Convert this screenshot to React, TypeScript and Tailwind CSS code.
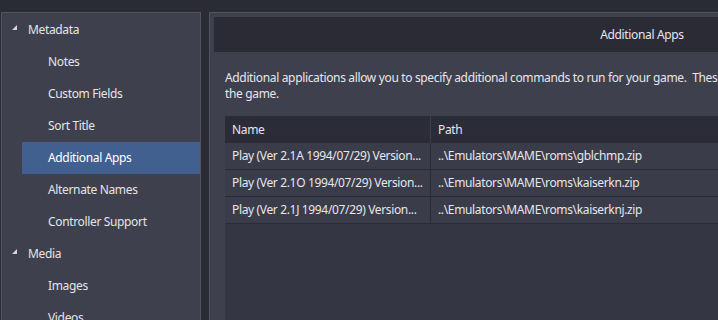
import React from "react";

const font = { fontFamily: '"Noto Sans", "Open Sans", sans-serif', letterSpacing: "-0.35px" };

type NavItem = { label: string; group?: boolean; active?: boolean };

const navItems: NavItem[] = [
  { label: "Metadata", group: true },
  { label: "Notes" },
  { label: "Custom Fields" },
  { label: "Sort Title" },
  { label: "Additional Apps", active: true },
  { label: "Alternate Names" },
  { label: "Controller Support" },
  { label: "Media", group: true },
  { label: "Images" },
  { label: "Videos" },
];

const apps = [
  { name: "Play (Ver 2.1A 1994/07/29) Version...", path: "..\\Emulators\\MAME\\roms\\gblchmp.zip" },
  { name: "Play (Ver 2.1O 1994/07/29) Version...", path: "..\\Emulators\\MAME\\roms\\kaiserkn.zip" },
  { name: "Play (Ver 2.1J 1994/07/29) Version...", path: "..\\Emulators\\MAME\\roms\\kaiserknj.zip" },
];

function Expander() {
  return (
    <svg width="6" height="6" viewBox="0 0 6 6" className="shrink-0">
      <polygon points="5,0 5,5 0,5" fill="#d4d5dc" />
    </svg>
  );
}

function Sidebar() {
  return (
    <aside className="ml-px w-[200px] shrink-0 border-l border-t border-r border-[#525463] bg-[#3e404d] pt-px">
      {navItems.map((item) =>
        item.group ? (
          <div key={item.label} className="flex h-8 items-center">
            <span className="ml-[10px] mr-[10px] mt-[-4px] flex">
              <Expander />
            </span>
            <span className="text-[12px] text-[#e4e4ea]">{item.label}</span>
          </div>
        ) : (
          <div
            key={item.label}
            className={`ml-[20px] flex h-8 items-center pl-[26px] text-[12px] text-[#e4e4ea] ${
              item.active ? "bg-[#41608f] text-white" : ""
            }`}
          >
            {item.label}
          </div>
        )
      )}
    </aside>
  );
}

function AppsTable() {
  return (
    <div className="mt-[14px] flex h-[260px] w-[834px] flex-col bg-[#343644] text-[12px] text-[#e6e6ec]">
      <div className="flex h-[27px] bg-[#2b2c38]">
        <div className="flex w-[206px] items-center border-r border-[#3b3d4a] pl-[7px]">Name</div>
        <div className="flex items-center pl-[7px]">Path</div>
      </div>
      {apps.map((app) => (
        <div key={app.path} className="flex h-[27px] border-b border-[#2a2b36] bg-[#3a3c4a]">
          <div className="flex w-[206px] items-center whitespace-nowrap border-r border-[#2a2b36] pl-[7px]">
            {app.name}
          </div>
          <div className="flex items-center whitespace-nowrap pl-[7px]">{app.path}</div>
        </div>
      ))}
    </div>
  );
}

export default function App() {
  return (
    <div className="flex h-[320px] w-[718px] overflow-hidden bg-[#2b2b36] pt-3" style={font}>
      <Sidebar />
      <main className="ml-2 w-[866px] shrink-0 border-l border-t border-[#525463] bg-[#3e404d] pl-1 pt-1">
        <div className="flex h-[35px] w-[856px] items-center justify-center bg-[#2b2b36] text-[12px] text-[#e6e6ec]">
          Additional Apps
        </div>
        <div className="px-[11px]">
          <p className="mt-[18px] whitespace-nowrap text-[12px] leading-[16px] text-[#e6e6ec]">
            Additional applications allow you to specify additional commands to run for your game.&nbsp; These
            can be run manually or automatically before or after
            <br />
            the game.
          </p>
          <AppsTable />
        </div>
      </main>
    </div>
  );
}
